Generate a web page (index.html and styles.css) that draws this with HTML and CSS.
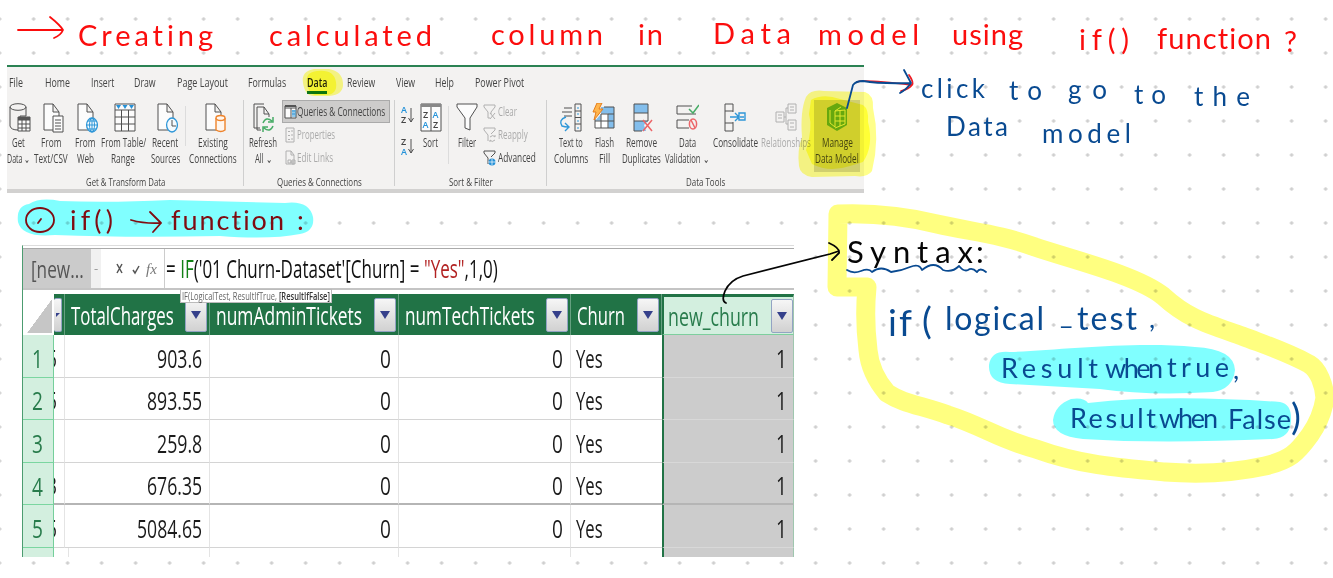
FILE: index.html
```html
<!DOCTYPE html>
<html lang="en">
<head>
<meta charset="utf-8">
<title>Calculated column notes</title>
<link rel="stylesheet" href="styles.css">
</head>
<body>
<main class="page">
  <section class="ribbon">
    <nav class="tabs">
      <span data-w="14">File</span><span data-w="25">Home</span><span data-w="23">Insert</span><span data-w="22">Draw</span><span data-w="51">Page Layout</span><span data-w="38">Formulas</span><span class="active" data-w="20">Data</span><span data-w="28">Review</span><span data-w="19">View</span><span data-w="19">Help</span><span data-w="49">Power Pivot</span>
    </nav>
    <div class="groups">
      <div class="group get">
        <div class="tools">
          <div class="tool"><svg class="icon" width="22" height="30" viewBox="0 0 22 30"><path class="doc" d="M1 4V23Q2 27 9 27H11V13H17V4"/><ellipse class="doc" cx="9" cy="4" rx="8" ry="3.3"/><path class="sheetbox" d="M9 14h12v14H9zM9 17h12M9 21h12M9 25h12M13 17v11M17 17v11"/><path class="dark" d="M9 14h12v3H9z"/></svg><span data-w="13">Get</span><span data-w="23">Data ⌄</span></div>
          <div class="tool"><svg class="icon" width="22" height="30" viewBox="0 0 22 30"><path class="sheetbox" d="M2 1h9l6 8v18H2zM11 1v8h6"/><path class="sheetbox" d="M11 13h10v16H11zM13 17h6M13 20h6M13 23h6M13 26h6"/></svg><span data-w="20">From</span><span data-w="34">Text/CSV</span></div>
          <div class="tool"><svg class="icon" width="22" height="30" viewBox="0 0 22 30"><path class="sheetbox" d="M2 1h9l6 8v18H2zM11 1v8h6"/><ellipse class="globe" cx="16" cy="22" rx="5.4" ry="7"/><path class="blue" d="M10.600 22h11M16 15v14M12 18h8M12 26h8"/><ellipse class="blue" cx="16" cy="22" rx="2.500" ry="7"/></svg><span data-w="20">From</span><span data-w="17">Web</span></div>
          <div class="tool"><svg class="icon" width="22" height="30" viewBox="0 0 22 30"><path class="sheetbox" d="M1 1h20v27H1zM1 7h20M1 14h20M1 21h20M7.500 7v21M14.500 7v21"/><path class="blue-fill" d="M2 2h5l-2.500 4zM8.500 2h5L11 6zM15 2h5l-2.500 4z"/></svg><span data-w="45">From Table/</span><span data-w="24">Range</span></div>
          <div class="tool"><svg class="icon" width="22" height="30" viewBox="0 0 22 30"><path class="sheetbox" d="M2 1h9l6 8v18H2zM11 1v8h6"/><ellipse class="globe" cx="16" cy="22" rx="5.400" ry="7"/><path class="doc" d="M16 17v6h4"/></svg><span data-w="26">Recent</span><span data-w="29">Sources</span></div>
          <i class="rule"></i>
          <div class="tool"><svg class="icon" width="22" height="30" viewBox="0 0 22 30"><path class="sheetbox" d="M2 1h9l6 8v18H2zM11 1v8h6"/><path class="orange" d="M12 15v12q5 3 9 0V15"/><ellipse class="orange" cx="16.500" cy="15" rx="4.500" ry="2.500"/></svg><span data-w="30">Existing</span><span data-w="48">Connections</span></div>
        </div>
        <div class="caption"><span data-w="79">Get &amp; Transform Data</span></div>
      </div>
      <div class="group queries">
        <div class="tools">
          <div class="tool"><svg class="icon" width="22" height="30" viewBox="0 0 22 30"><path class="doc" d="M8 25H2V1h10M9 27H5V4h7l5 7v3M12 4v7h5"/><path class="green" d="M11 20q3-7 9-2M21 14v5h-5M21 23q-3 7-9 2M11 29v-5h5"/></svg><span data-w="28">Refresh</span><span data-w="17">All ⌄</span></div>
          <div class="list">
            <div class="item pressed"><svg width="13" height="16" viewBox="0 0 13 16"><path class="sheetbox" d="M1 2h11v12H1zM1 4h11M7 4v10"/><path class="dark" d="M1 1h11v2H1z"/><path class="blue" d="M9 6v7M11 6v7M8 7h3M8 10h3"/></svg><span data-w="88">Queries &amp; Connections</span></div>
            <div class="item off"><svg width="13" height="16" viewBox="0 0 13 16"><path class="pale" d="M2 1h8v14H2zM4 4l1 1 1-1M4 8l1 1 1-1M4 12l1 1 1-1M7 4h2M7 8h2M7 12h2"/></svg><span data-w="38">Properties</span></div>
            <div class="item off"><svg width="13" height="16" viewBox="0 0 13 16"><path class="pale" d="M2 1h5l3 4v9H2zM7 1v4h3"/><path class="pale" d="M4 10h3v3H4zM8 10h3v4H8zM6 12h4"/></svg><span data-w="36">Edit Links</span></div>
          </div>
        </div>
        <div class="caption"><span data-w="85">Queries &amp; Connections</span></div>
      </div>
      <div class="group sort">
        <div class="tools">
          <svg class="az" width="16" height="60" viewBox="0 0 16 60"><text class="a" x="2" y="13">A</text><text x="2" y="23">Z</text><path class="doc" d="M12 8v14M9.500 18l2.500 4 2.500-4"/><text x="2" y="45">Z</text><text class="a" x="2" y="55">A</text><path class="doc" d="M12 39v14M9.500 49l2.500 4 2.500-4"/></svg>
          <div class="tool"><svg class="icon" width="22" height="30" viewBox="0 0 22 30"><path class="sheetbox" d="M1 1h20v27H1zM11 4v24"/><path class="band" d="M1 1h20v3H1z"/><text x="3" y="15">Z</text><text class="a" x="2.500" y="25">A</text><text class="a" x="12.500" y="15">A</text><text x="13" y="25">Z</text></svg><span data-w="15">Sort</span></div>
          <i class="rule"></i>
          <div class="tool"><svg class="icon" width="22" height="30" viewBox="0 0 22 30"><path class="sheetbox" d="M1 1h20v3l-7 11v12l-5-2V15L1 4z"/></svg><span data-w="18">Filter</span></div>
          <div class="list">
            <div class="item off"><svg width="13" height="16" viewBox="0 0 13 16"><path class="pale" d="M1 1h11v2L8 8v2M1 1v2l4 5v6h2M7 9l5 6M12 9l-5 6"/></svg><span data-w="19">Clear</span></div>
            <div class="item off"><svg width="13" height="16" viewBox="0 0 13 16"><path class="pale" d="M1 1h11v2L8 7M1 1v2l4 5v6M7 10q3-3 5 0V8M12 13q-3 3-5 0v2"/></svg><span data-w="30">Reapply</span></div>
            <div class="item"><svg width="13" height="16" viewBox="0 0 13 16"><path class="doc" d="M1 1h11v2L8 7M1 1v2l4 5v6"/><circle class="blue-fill" cx="9" cy="12" r="3.500"/><path class="white" d="M5 12h8M9 9v6"/></svg><span data-w="38">Advanced</span></div>
          </div>
        </div>
        <div class="caption"><span data-w="44">Sort &amp; Filter</span></div>
      </div>
      <div class="group data">
        <div class="tools">
          <div class="tool"><svg class="icon" width="24" height="30" viewBox="0 0 24 30"><path class="doc" d="M5 5h8M3 9h10M5 13h8M16 1h6v27h-6zM16 8h6M16 14.500h6M16 21h6"/><path class="arrow" d="M7 14q-8 3-4 9 3 1 6 1M6 20l4 4-4 4"/><path class="blue" d="M18 5h2M18 11h2M18 18h2M18 25h2"/></svg><span data-w="24">Text to</span><span data-w="34">Columns</span></div>
          <div class="tool"><svg class="icon" width="24" height="30" viewBox="0 0 24 30"><path class="bluebox" d="M9 4h13v21H3V18l6-7z"/><path class="white" d="M3 18h13v7H3zM9 11h7v7H9z"/><path class="doc" d="M3 16v9h19V4H12M9 11h13M3 18h19M9 11v14M16 11v14"/><path class="bolt" d="M5 0h5L7 6h4L2 17l2-8H1z"/></svg><span data-w="19">Flash</span><span data-w="11">Fill</span></div>
          <div class="tool"><svg class="icon" width="24" height="30" viewBox="0 0 24 30"><path class="bluebox" d="M5 1h14v9H5zM5 18h14l-4 4 2 6H5z"/><path class="doc" d="M5 1h14v9H5zM5 10v18h8M5 18h14M19 10v8"/><path class="red" d="M14 17l9 11M23 17l-9 11"/></svg><span data-w="31">Remove</span><span data-w="39">Duplicates</span></div>
          <div class="tool"><svg class="icon" width="24" height="30" viewBox="0 0 24 30"><path class="doc" d="M17 3H2v8h19M14 17H2v8h12"/><path class="green" d="M14 6l4 4 6-8"/><ellipse class="red" cx="18" cy="21" rx="3.600" ry="5"/><path class="red" d="M16 17l4 8"/></svg><span data-w="17">Data</span><span data-w="44">Validation ⌄</span></div>
          <div class="tool"><svg class="icon" width="24" height="30" viewBox="0 0 24 30"><path class="doc" d="M2 1h8v27H2zM2 8h8M2 20h8"/><path class="lid" d="M10 9v10"/><path class="arrow" d="M7 14h8M12 10l4 4-4 4M16 10h6v7h-6zM17 14h4"/></svg><span data-w="45">Consolidate</span></div>
          <div class="tool off"><svg class="icon" width="24" height="30" viewBox="0 0 24 30"><path class="pale" d="M2 9h8v10H2zM14 1h8v9h-8zM14 17h8v10h-8zM10 14h2M14 5h-2v16h2M4 12h4M4 15h4M16 4h4M16 7h4M16 20h4M16 24h4"/></svg><span data-w="50">Relationships</span></div>
          <div class="tool manage"><svg class="icon" width="24" height="30" viewBox="0 0 24 30"><path class="leaf" d="M12 0l10 5v17l-10 6-10-6V5z"/><path class="leafline" d="M5 7v13l5 4V8l6-4M10 8l10-1v14l-10 4M10 13h10M10 18h10M15 8v15"/></svg><span data-w="31">Manage</span><span data-w="44">Data Model</span></div>
        </div>
        <div class="caption"><span data-w="39">Data Tools</span></div>
      </div>
    </div>
  </section>

  <section class="sheet">
    <div class="formula-bar">
      <div class="name"><span data-w="53">[new...</span></div>
      <div class="drop">-</div>
      <div class="keys"><svg width="42" height="20" viewBox="0 0 42 20"><path class="key" d="M2 5l5 9M7 5l-5 9M18 11l2 3 4-7"/><text x="31" y="15">fx</text></svg></div>
      <div class="formula"><span data-w="332">= <b>IF</b>('01 Churn-Dataset'[Churn] = <em>"Yes"</em>,1,0)</span></div>
    </div>
    <div class="grid" id="grid"></div>
    <div class="hint"><span data-w="148">IF(LogicalTest, ResultIfTrue, <b>[ResultIfFalse]</b></span></div>
  </section>

  <svg class="marks" width="1333" height="578" viewBox="0 0 1333 578">
    <path class="y-soft" d="M303 83Q301 71 314 69H329Q342 71 343 83T329 96H314Q305 96 303 83z"/>
    <path class="y-strong" d="M307 83Q305 72 317 71Q334 69 336 82T325 95H315Q308 93 307 83z"/>
    <path class="y-soft" d="M806 97Q811 89 824 91L865 92Q874 95 873 108Q880 139 872 171Q867 178 855 176L812 177Q800 175 799 166Q797 150 802 137Q800 111 806 97z"/>
    <path class="y-strong" d="M811 100Q823 93 840 99L863 105Q869 109 868 122Q874 146 863 162L850 166Q829 173 812 164L806 150Q813 128 809 114z"/>
    <path class="cyan-fill" d="M29 204Q40 197 60 201Q110 203 170 200L285 203Q309 200 313 217Q315 231 300 234Q270 240 220 236Q130 238 55 235Q22 238 18 222Q16 206 29 204z"/>
    <path class="y-pen" d="M838 214C863 213 901 215 937 224C972 232 1000 234 1035 247C1070 259 1137 275 1163 296C1188 319 1208 324 1242 336C1271 347 1287 352 1309 364C1319 370 1324 385 1325 398Q1322 418 1310 435C1297 453 1290 460 1265 466Q1220 476 1165 472C1119 468 1080 465 1036 449C1000 440 983 426 948 415C920 405 904 404 887 393Q870 373 868 350Q864 318 867 287H837L838 214"/>
    <path class="cyan-fill" d="M989 365Q991 350 1010 352C1060 350 1135 341 1195 347Q1234 349 1235 370Q1233 389 1213 392Q1150 396 1100 389L1010 384Q988 383 989 365z"/>
    <path class="cyan-fill" d="M1053 420Q1055 405 1071 399Q1084 397 1088 403C1150 396 1220 398 1280 402Q1292 404 1291 421Q1290 438 1273 439Q1160 444 1083 439Q1053 436 1053 420z"/>
  </svg>

  <svg class="ink" width="1333" height="578" viewBox="0 0 1333 578">
    <g class="title">
      <path d="M18 30H62M50 17Q60 25 63 30Q61 35 54 38"/>
      <text x="78" y="46" textLength="135">Creating</text><text x="269" y="46" textLength="163">calculated</text><text x="491" y="45" textLength="112">column</text><text x="638" y="45" textLength="25">in</text><text x="713" y="44" textLength="78">Data</text><text x="818" y="45" textLength="101">model</text><text x="952" y="45" textLength="71">using</text><text x="1079" y="50" textLength="50">if()</text><text x="1157" y="49" textLength="114">function</text><text x="1284" y="52">?</text>
    </g>
    <g class="note">
      <path class="redline" d="M857 82Q861 79 912 85M909 75Q914 82 912 85Q909 89 901 91"/>
      <path d="M847 108L853 85Q856 81 863 81Q880 84 911 83M904 70L911 83Q907 89 900 93"/>
      <text x="921" y="98" textLength="64">click</text><text x="1009" y="100" textLength="33">to</text><text x="1068" y="99" textLength="39">go</text><text x="1134" y="104" textLength="32">to</text><text x="1194" y="106" textLength="56">the</text><text x="946" y="136" textLength="62">Data</text><text x="1042" y="143" textLength="89">model</text>
    </g>
    <g class="heading">
      <ellipse cx="40" cy="220" rx="14" ry="12"/><path d="M38 223l3-4M131 220Q145 224 161 223M150 212L161 223L153 232"/>
      <text x="70" y="230" textLength="43">if()</text><text x="171" y="230" textLength="113">function</text><text x="297" y="230">:</text>
    </g>
    <g class="pen">
      <path d="M726 303Q721 301 725 291Q730 280 743 276L830 254L839 251M829 243Q840 248 839 253L832 260"/>
      <text x="847" y="263" textLength="126">Syntax</text><text x="976" y="263">:</text>
    </g>
    <g class="syntax">
      <path d="M847 270Q853 274 861 271T872 272Q881 265 891 272Q901 271 910 267T922 270Q934 260 943 270Q952 273 959 266Q964 272 968 270Q972 267 977 272Q980 267 986 272"/>
      <text class="tall" x="888" y="336" textLength="24">if</text><text class="tall" x="922" y="334">(</text><text class="mid" x="945" y="330" textLength="99">logical</text><text x="1060" y="324">_</text><text class="mid" x="1077" y="330" textLength="60">test</text><text x="1149" y="328">,</text>
      <text x="1001" y="378" textLength="97">Result</text><text x="1105" y="378" textLength="58">when</text><text x="1167" y="377" textLength="62">true</text><text x="1233" y="379">,</text>
      <text x="1070" y="428" textLength="86">Result</text><text x="1159" y="428" textLength="59">when</text><text x="1228" y="429" textLength="63">False</text><text class="tall" x="1291" y="430">)</text>
    </g>
  </svg>
</main>
<script src="page.js"></script>
</body>
</html>
```

FILE: styles.css
```css
body { margin: 0; background: #fff; }
.page {
  position: relative; width: 1333px; height: 578px; overflow: hidden; box-sizing: border-box;
  padding: 65px 0 0 7px;
  background: radial-gradient(circle at 50% 50%, #cfcfcf 1.3px, transparent 2.1px) -17.400px 2px / 34px 34px #fff;
  font-family: "Open Sans", "Noto Sans", sans-serif; color: #444;
}
[data-w] { display: block; white-space: nowrap; text-align: left; }
[data-w] > span { display: inline-block; transform-origin: 0 50%; white-space: pre; }

.ribbon { width: 857px; height: 128px; box-sizing: border-box; background: #f3f2f1; border-top: 2px solid #2b8253; border-bottom: 4px solid #d2d1d0; font-size: 12px; line-height: 15.500px; font-weight: 500; }
.tabs { display: flex; height: 32px; align-items: center; padding-left: 2px; gap: 20.500px; }
.tabs span:nth-child(1) { margin-right: 1.500px; }
.tabs .active { color: #222; font-weight: 600; box-shadow: 0 3px 0 #0d7530; }
.groups { display: flex; height: 90px; }
.group { box-sizing: border-box; display: flex; flex-direction: column; border-right: 1px solid #cfcfcf; height: 86px; margin-top: 1px; }
.get { width: 237px; } .queries { width: 151px; } .sort { width: 152px; } .data { width: 317px; border-right: 0; }
.tools { display: grid; height: 72px; flex: none; }
.get .tools { grid-template-columns: 22px 44px 24px 52px 32px 6px 52px; }
.get .icon { position: relative; left: 2px; }
.queries .tools { grid-template-columns: 38px 108px; }
.sort .tools { grid-template-columns: 24px 23px 14px 22px 5px 58px; }
.sort .list { grid-column: 6; }
.data .tools { grid-template-columns: 47px 20px 54px 38px 58px 44px 6px 46px; }
.data .manage { grid-column: 8; background: #d0cfcd; }
.tool { display: flex; flex-direction: column; align-items: center; padding-top: 3px; min-width: 0; }
.icon { flex: none; margin-bottom: 2px; }
.rule { width: 1px; height: 40px; margin: 6px 0 0 4px; background: #dcdcdc; }
.sort .rule { height: 58px; margin: 6px; }
.list { display: grid; grid-template-rows: 23px 23px 23px; }
.item { display: flex; align-items: center; gap: 2px; }
.queries .item { padding-left: 2px; gap: 0; }
.pressed { background: #cdcccb; box-shadow: inset 0 0 0 1px #aaa; }
.off { color: #aaa; }
.caption { display: flex; justify-content: center; height: 19px; flex: none; align-items: center; font-size: 11px; color: #444; }

.doc, .blue, .orange, .green, .red, .pale, .key, .arrow { fill: none; stroke: #505050; stroke-width: 1; }
.sheetbox { fill: #fcfcfc; stroke: #505050; stroke-width: 1; }
.globe { fill: #f4fafe; stroke: #2f97d8; stroke-width: 1.3; }
.blue, .arrow { stroke: #2f97d8; } .arrow { stroke-width: 1.4; }
.orange { fill: #fff6ee; stroke: #ee842c; stroke-width: 1.4; } .green { stroke: #47ac66; stroke-width: 1.5; }
.red { stroke: #ec6568; stroke-width: 1.5; } .pale { stroke: #b0b0b0; }
.dark { fill: #555; } .band { fill: #888; } .blue-fill { fill: #2691d7; } .bluebox { fill: #83beec; } .white { fill: #fff; stroke: #fff; stroke-width: .7; }
.lid { stroke: #f3f2f1; stroke-width: 2; } .bolt { fill: #ffb64f; stroke: #e47d1b; }
.leaf { fill: #67a83e; } .leafline { fill: none; stroke: #e1e8cf; stroke-width: 1; }
.sort svg text { font: 600 9px "Open Sans", sans-serif; fill: #444; } .sort svg .a { fill: #2492d9; }
.sort .az { margin-left: 4px; }

.sheet { position: relative; margin: 52px 0 0 15px; width: 772px; height: 312px; overflow: hidden; background: #fff; box-sizing: border-box; border-top: 1px solid #ddd; border-left: 1px solid #4c9c70; }
.formula-bar { display: grid; grid-template-columns: 68px 10px 64px 1fr; height: 42px; margin-top: 2px; box-sizing: border-box; border-top: 1px solid #aaa; border-bottom: 2px solid #c4c4c4; font-size: 26px; line-height: 39px; font-weight: 500; }
.name { padding-left: 8px; background: #cbcbcb; color: #555; font-size: 24px; }
.drop { background: #f1f1f1; text-align: center; font-size: 13px; color: #999; }
.keys { display: flex; align-items: center; justify-content: flex-end; border-right: 1px solid #ccc; padding-right: 7px; }
.key { stroke: #555; stroke-width: 1.500; }
.keys text { font: italic 15px "Liberation Serif", serif; fill: #777; }
.formula { padding-left: 1px; color: #111; }
.formula b { font-weight: 500; color: #128116; } .formula em { font-style: normal; color: #b22222; }
.hint { position: absolute; left: 157px; top: 43px; height: 12px; padding: 0 1px; border: 1px solid #bbb; background: #fff; font-size: 10.500px; line-height: 12px; color: #666; }
.hint b { font-weight: 600; color: #333; }
.grid { display: grid; grid-template-columns: 31px 11px 145px 189px 172px 91px 132px; grid-template-rows: 41px repeat(4, 42.600px) 42.500px 10px; margin-top: 4px; font-size: 26px; line-height: 40px; font-weight: 500; }
.cell { box-sizing: border-box; display: flex; align-items: center; justify-content: flex-end; padding: 4px 7px 0; border-right: 1px solid #e4e4e4; border-bottom: 1px solid #d4d4d4; color: #1b1b1b; overflow: hidden; min-width: 0; }
.head { justify-content: space-between; background: #217346; color: #fff; padding: 1px 2px 0 6px; border-right-color: #65a080; border-bottom: 0; }
.corner { background: linear-gradient(to bottom right, transparent 50%, #c6c6c6 50.500%) 4px 5px / 25px 34px no-repeat #fff; border: 0; }
.num { justify-content: center; background: #d3efdf; color: #287c4c; border-right: 1px solid #75cf9b; border-bottom-color: #7ad6a0; padding: 4px 2px 0 0; }
.sliver { padding: 4px 0 0; }
.sliver > span { margin-right: 7px; }
.text { justify-content: flex-start; padding-left: 5px; border-right: 0; }
.new { background: #ccc; border-left: 2px solid #217346; border-right-color: #9fc7af; border-bottom-color: #d8d8d8; padding-right: 6px; }
.head.sliver { padding: 0 2px 0 0; }
.head.new { background: #d3efdf; color: #287c4c; border-top: 3px solid #217346; border-bottom: 1px solid #7dcf9e; padding: 0 0 0 4px; }
.freeze { border-bottom: 2px solid #b5b5b5; }
.button { flex: none; box-sizing: border-box; width: 22px; height: 34px; display: grid; place-items: center; border: 1px solid #93a3c3; border-radius: 2px; background: linear-gradient(#f6f6f6, #d1d1d1); }
.button::after { content: ""; border: 5px solid transparent; border-top: 8px solid #35408b; border-bottom: 0; }
.sliver .button { width: 8px; border-left: 0; } .sliver .button::after { border-width: 4px 4px 0 0; }

.marks, .ink { position: absolute; left: 0; top: 0; }
.marks { mix-blend-mode: multiply; }
.y-soft { fill: #ffff8a; } .y-strong { fill: #ffff36; } .cyan-fill { fill: #80ffff; }
.y-pen { fill: none; stroke: #ffff80; stroke-width: 19; stroke-linejoin: round; stroke-linecap: round; }
.ink { font-family: Lato, "Open Sans", sans-serif; font-size: 27px; font-variant-ligatures: none; }
.ink path, .ink ellipse { fill: none; stroke: currentColor; stroke-width: 1.800; stroke-linecap: round; stroke-linejoin: round; }
.ink text { fill: currentColor; }
.title { color: #fb0d0d; font-size: 29px; } .note, .syntax { color: #094a91; } .heading { color: #800c12; } .pen { color: #050505; font-size: 31px; }
.note { font-size: 26px; } .syntax .tall { font-size: 37px; } .syntax .mid { font-size: 32px; }
.ink .redline { stroke: #ed1c24; }
```

FILE: page.js
```js
const names = [["TotalCharges", 103], ["numAdminTickets", 146], ["numTechTickets", 130], ["Churn", 48], ["new_churn", 91]];
const rows = [["5", "903.6", 45], ["5", "893.55", 55], ["1", "259.8", 45], ["3", "676.35", 55], ["5", "5084.65", 65]];
const fit = (text, width) => `<span data-w="${width}">${text}</span>`;
const cell = (kind, body) => `<div class="cell ${kind}">${body}</div>`;
const button = '<i class="button"></i>';

let html = cell("corner", "") + cell("head sliver", button);
names.forEach(([name, width], i) => { html += cell(i === 4 ? "head new" : "head", fit(name, width) + button); });
rows.forEach(([edge, total, width], i) => {
  const line = i === 3 ? " freeze" : "";
  html += cell("num", fit(i + 1, 11)) + cell("sliver" + line, fit(edge, 10)) + cell(line, fit(total, width))
    + cell(line, fit("0", 11)) + cell(line, fit("0", 11)) + cell("text" + line, fit("Yes", 27)) + cell("new" + line, fit("1", 11));
});
html += cell("num", "") + cell("", "").repeat(4) + cell("text", "") + cell("new", "");
document.getElementById("grid").innerHTML = html;

// Condense each label horizontally to its column's width.
document.querySelectorAll("[data-w]").forEach(label => {
  const inner = document.createElement("span");
  inner.append(...label.childNodes);
  label.append(inner);
  const width = Number(label.dataset.w);
  inner.style.transform = `scaleX(${width / inner.offsetWidth})`;
  label.style.width = width + "px";
  inner.style.marginRight = (width - inner.offsetWidth) + "px";
});
```
